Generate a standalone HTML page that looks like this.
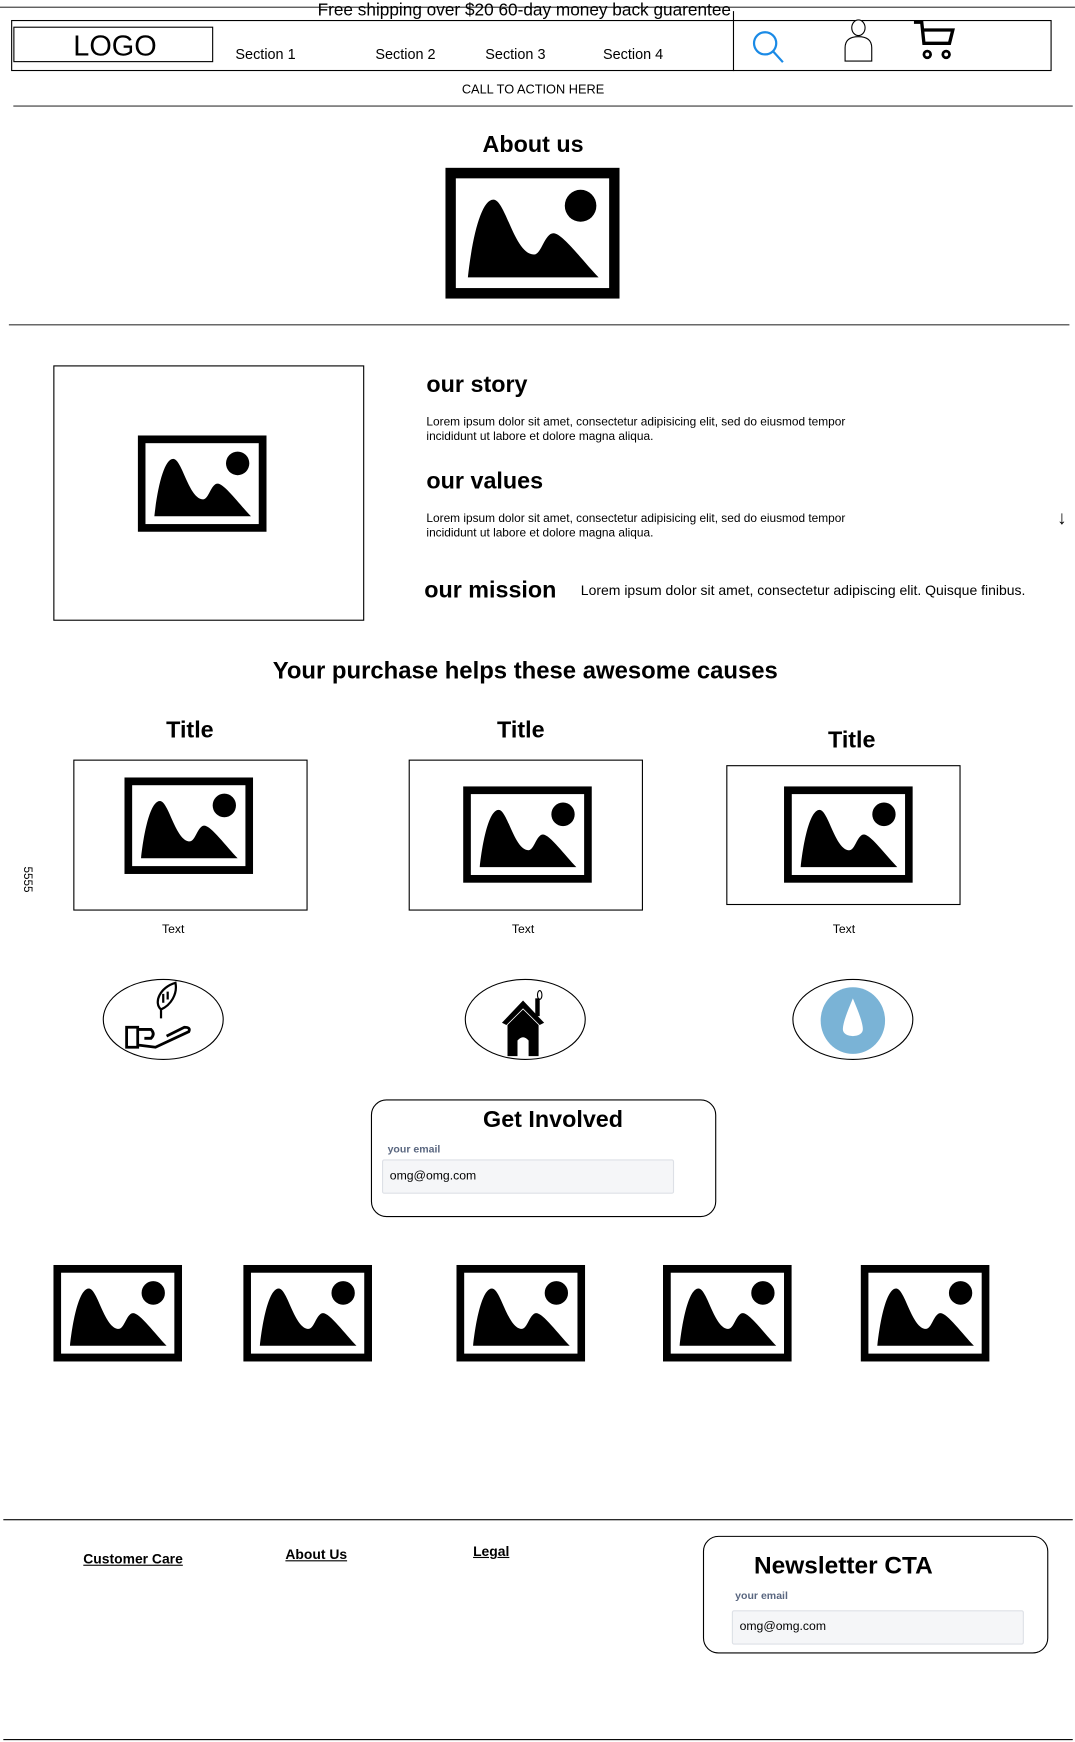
<!DOCTYPE html>
<html><head><meta charset="utf-8"><style>
html,body{margin:0;padding:0;background:#fff;width:1075px;height:1742px;overflow:hidden}
#w{position:absolute;left:0;top:0;width:968px;height:1569px;transform:scale(1.1105);transform-origin:0 0;font-family:"Liberation Sans",Arial,sans-serif;color:#000}
.a{position:absolute;white-space:nowrap}
.h{font-weight:bold;font-size:21px}
.c{transform:translateX(-50%)}
.ln{position:absolute;height:0;border-top:1.3px solid #333}
.box{position:absolute;border:1px solid #000;box-sizing:border-box}
.im{position:absolute}
.p{font-size:10.5px;line-height:13px}
.u{font-weight:bold;font-size:12.5px;text-decoration:underline}
</style></head><body><div id="w">
<svg width="0" height="0" style="position:absolute"><defs>
<symbol id="pic" viewBox="0 0 116 86" preserveAspectRatio="none">
<rect x="0" y="0" width="116" height="86" fill="#000"/>
<rect x="7" y="7" width="102" height="72" fill="#fff"/>
<path d="M15 72 C18 45 24 21 32 21 C40 21 46 57 59 57 C64 57 66 43 72 43 C78 43 92 62 102 72 Z" fill="#000"/>
<circle cx="90" cy="25" r="10.5" fill="#000"/>
</symbol></defs></svg>

<div class="ln" style="left:0;top:6px;width:968px"></div>
<div class="a" style="left:286px;top:1px;font-size:15.5px">Free shipping over $20 60-day money back guarentee</div>
<div class="box" style="left:10px;top:18px;width:937px;height:46px;border-width:1.3px"></div>
<div class="box" style="left:12px;top:24px;width:180px;height:32px"></div>
<div class="a" style="left:66px;top:26px;font-size:26px">LOGO</div>
<div class="a" style="left:212px;top:41px;font-size:13px">Section 1</div>
<div class="a" style="left:338px;top:41px;font-size:13px">Section 2</div>
<div class="a" style="left:437px;top:41px;font-size:13px">Section 3</div>
<div class="a" style="left:543px;top:41px;font-size:13px">Section 4</div>
<div style="position:absolute;left:660px;top:10px;width:1px;height:54px;background:#000"></div>
<svg class="im" style="left:676px;top:26px" width="32" height="32" viewBox="0 0 32 32"><circle cx="13" cy="13" r="10" fill="none" stroke="#1a8ae6" stroke-width="2"/><line x1="20" y1="20" x2="29" y2="30" stroke="#1a8ae6" stroke-width="2"/></svg>
<svg class="im" style="left:758px;top:17px" width="32" height="40" viewBox="0 0 32 40"><ellipse cx="15" cy="8" rx="6" ry="7" fill="#fff" stroke="#000"/><path d="M3 38 V26 Q3 16 15 16 Q27 16 27 26 V38 Z" fill="#fff" stroke="#000"/></svg>
<svg class="im" style="left:821px;top:17px" width="40" height="38" viewBox="0 0 40 38"><path d="M2 3 H9 L11 22 H34 L37 10 H10" fill="none" stroke="#000" stroke-width="3"/><circle cx="14" cy="32" r="3" fill="none" stroke="#000" stroke-width="2.5"/><circle cx="31" cy="32" r="3" fill="none" stroke="#000" stroke-width="2.5"/></svg>
<div class="a c" style="left:480px;top:75px;font-size:11.5px">CALL TO ACTION HERE</div>
<div class="ln" style="left:12px;top:95px;width:954px"></div>

<div class="a c h" style="left:480px;top:119px">About us</div>
<svg class="im" style="left:401px;top:151px" width="157" height="118"><use href="#pic"/></svg>
<div class="ln" style="left:8px;top:292px;width:955px"></div>

<div class="box" style="left:48px;top:329px;width:280px;height:230px"></div>
<svg class="im" style="left:124px;top:392px" width="116" height="87"><use href="#pic"/></svg>
<div class="a h" style="left:384px;top:335px">our story</div>
<div class="a p" style="left:384px;top:374px;font-size:10.7px">Lorem ipsum dolor sit amet, consectetur adipisicing elit, sed do eiusmod tempor<br>incididunt ut labore et dolore magna aliqua.</div>
<div class="a h" style="left:384px;top:422px">our values</div>
<div class="a p" style="left:384px;top:461px;font-size:10.7px">Lorem ipsum dolor sit amet, consectetur adipisicing elit, sed do eiusmod tempor<br>incididunt ut labore et dolore magna aliqua.</div>
<div class="a" style="left:952px;top:457px;font-size:17px">↓</div>
<div class="a h" style="left:382px;top:520px">our mission</div>
<div class="a" style="left:523px;top:525px;font-size:12.6px">Lorem ipsum dolor sit amet, consectetur adipiscing elit. Quisque finibus.</div>

<div class="a c h" style="left:473px;top:592px;font-size:21.5px">Your purchase helps these awesome causes</div>
<div class="a c h" style="left:171px;top:646px">Title</div>
<div class="a c h" style="left:469px;top:646px">Title</div>
<div class="a c h" style="left:767px;top:655px">Title</div>
<div class="box" style="left:66px;top:684px;width:211px;height:136px"></div>
<div class="box" style="left:368px;top:684px;width:211px;height:136px"></div>
<div class="box" style="left:654px;top:689px;width:211px;height:126px"></div>
<svg class="im" style="left:112px;top:700px" width="116" height="87"><use href="#pic"/></svg>
<svg class="im" style="left:417px;top:708px" width="116" height="87"><use href="#pic"/></svg>
<svg class="im" style="left:706px;top:708px" width="116" height="87"><use href="#pic"/></svg>
<div class="a c" style="left:156px;top:831px;font-size:11px">Text</div>
<div class="a c" style="left:471px;top:831px;font-size:11px">Text</div>
<div class="a c" style="left:760px;top:831px;font-size:11px">Text</div>
<div class="a" style="left:13px;top:786px;font-size:10.5px;transform:rotate(90deg)">5555</div>

<svg class="im" style="left:92px;top:881px" width="112" height="76" viewBox="0 0 112 76"><ellipse cx="55" cy="37" rx="54" ry="36" fill="#fff" stroke="#000"/>
<path d="M66 4 C52 8 46 22 53 28 C62 24 68 14 66 4 Z M55 14 V22 M59 12 V19 M53 28 V36" fill="none" stroke="#000" stroke-width="2"/>
<path d="M22 44 H32 V62 H22 Z M32 46 H44 Q48 50 44 54 H38 M32 60 L48 62 L78 48 Q80 44 74 44 L58 52" fill="none" stroke="#000" stroke-width="2.5"/></svg>
<svg class="im" style="left:418px;top:881px" width="112" height="76" viewBox="0 0 112 76"><ellipse cx="55" cy="37" rx="54" ry="36" fill="#fff" stroke="#000"/>
<path d="M34 40 L53 20 L72 40 L68 42 L53 27 L38 42 Z" fill="#000"/><path d="M39 42 L53 28 L67 42 V70 H58 V56 Q53 50 48 56 V70 H39 Z" fill="#000"/><rect x="64" y="18" width="4" height="16" fill="#000"/><ellipse cx="68" cy="15" rx="2" ry="4" fill="none" stroke="#000"/></svg>
<svg class="im" style="left:713px;top:881px" width="112" height="76" viewBox="0 0 112 76"><ellipse cx="55" cy="37" rx="54" ry="36" fill="#fff" stroke="#000"/>
<ellipse cx="55" cy="38" rx="29" ry="30" fill="#7ab3d6"/><path d="M55 18 C50 30 46 40 46 46 C46 54 64 54 64 46 C64 40 60 30 55 18 Z" fill="#fff"/></svg>

<div class="box" style="left:334px;top:990px;width:311px;height:106px;border-radius:14px;border-width:1.3px"></div>
<div class="a c h" style="left:498px;top:997px">Get Involved</div>
<div class="a" style="left:349px;top:1030px;font-size:9.5px;font-weight:bold;color:#5a6780">your email</div>
<div class="box" style="left:344px;top:1044px;width:263px;height:31px;background:#f5f6f8;border:1.5px solid #dde0e6;border-radius:2px"></div>
<div class="a" style="left:351px;top:1053px;font-size:11px">omg@omg.com</div>

<svg class="im" style="left:48px;top:1139px" width="116" height="87"><use href="#pic"/></svg>
<svg class="im" style="left:219px;top:1139px" width="116" height="87"><use href="#pic"/></svg>
<svg class="im" style="left:411px;top:1139px" width="116" height="87"><use href="#pic"/></svg>
<svg class="im" style="left:597px;top:1139px" width="116" height="87"><use href="#pic"/></svg>
<svg class="im" style="left:775px;top:1139px" width="116" height="87"><use href="#pic"/></svg>

<div style="position:absolute;left:3px;top:1368px;width:963px;height:1px;background:#000"></div>
<div class="a u" style="left:75px;top:1397px">Customer Care</div>
<div class="a u" style="left:257px;top:1393px">About Us</div>
<div class="a u" style="left:426px;top:1390px">Legal</div>
<div class="box" style="left:633px;top:1383px;width:311px;height:106px;border-radius:14px;border-width:1.3px"></div>
<div class="a" style="left:679px;top:1397px;font-size:22px;font-weight:bold">Newsletter CTA</div>
<div class="a" style="left:662px;top:1432px;font-size:9.5px;font-weight:bold;color:#5a6780">your email</div>
<div class="box" style="left:659px;top:1450px;width:263px;height:31px;background:#f5f6f8;border:1.5px solid #dde0e6;border-radius:2px"></div>
<div class="a" style="left:666px;top:1459px;font-size:11px">omg@omg.com</div>
<div style="position:absolute;left:3px;top:1566px;width:963px;height:1px;background:#000"></div>
</div></body></html>
